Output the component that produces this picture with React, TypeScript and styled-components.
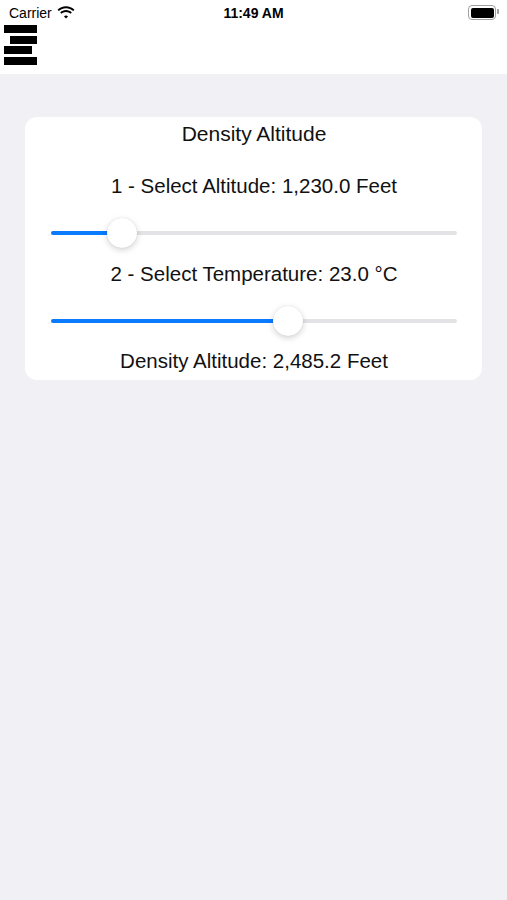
import styled, { createGlobalStyle } from "styled-components";

const GlobalStyle = createGlobalStyle`
  html, body {
    margin: 0;
    padding: 0;
    background: #f0f0f5;
    font-family: "Liberation Sans", Arial, sans-serif;
  }
`;

const Screen = styled.div`
  width: 507px;
  height: 900px;
  background: #f0f0f5;
  display: flex;
  flex-direction: column;
`;

const TopBar = styled.div`
  background: #ffffff;
  height: 74px;
  display: flex;
  flex-direction: column;
`;

const StatusBar = styled.div`
  height: 25px;
  display: flex;
  align-items: center;
  justify-content: space-between;
  padding: 0 9px;
  font-size: 14px;
  color: #000;
  position: relative;
`;

const Carrier = styled.div`
  display: flex;
  align-items: center;
  gap: 5px;
`;

const Time = styled.div`
  position: absolute;
  left: 0;
  right: 0;
  text-align: center;
  font-weight: bold;
  pointer-events: none;
`;

const Battery = styled.div`
  width: 23px;
  height: 10px;
  border: 1.5px solid #a0a0a0;
  border-radius: 4px;
  padding: 1.5px;
  position: relative;
  margin-right: 2px;
  &::after {
    content: "";
    position: absolute;
    right: -4px;
    top: 3px;
    width: 2px;
    height: 5px;
    background: #a0a0a0;
    border-radius: 0 1px 1px 0;
  }
`;

const BatteryFill = styled.div`
  width: 100%;
  height: 100%;
  background: #000;
  border-radius: 2px;
`;

const MenuIcon = styled.div`
  margin-left: 4px;
  width: 33px;
  display: flex;
  flex-direction: column;
  gap: 2.5px;
`;

const MenuBar = styled.div<{ $inset: number; $width: number }>`
  flex: none;
  height: 8px;
  background: #000;
  margin-left: ${(p) => p.$inset}px;
  width: ${(p) => p.$width}px;
`;

const Body = styled.div`
  padding: 43px 25px 0 25px;
`;

const Card = styled.div`
  background: #ffffff;
  border-radius: 12px;
  padding: 5px 25px 7px 26px;
  display: flex;
  flex-direction: column;
  align-items: stretch;
`;

const Label = styled.div<{ $mt: number; $size?: number }>`
  text-align: center;
  font-size: ${(p) => p.$size ?? 20.5}px;
  color: #111;
  margin-top: ${(p) => p.$mt}px;
  line-height: 24px;
`;

const SliderWrap = styled.div<{ $mt: number }>`
  position: relative;
  height: 30px;
  margin-top: ${(p) => p.$mt}px;
`;

const Track = styled.div`
  position: absolute;
  left: 0;
  right: 0;
  top: 13px;
  height: 4px;
  border-radius: 2px;
  background: #e3e3e6;
`;

const Fill = styled.div`
  position: absolute;
  left: 0;
  top: 13px;
  height: 4px;
  border-radius: 2px;
  background: #0a7aff;
`;

const Thumb = styled.div`
  position: absolute;
  top: 0;
  width: 30px;
  height: 30px;
  margin-left: -15px;
  border-radius: 50%;
  background: #fff;
  box-shadow: 0 2px 6px rgba(0, 0, 0, 0.18), 0 0 1px rgba(0, 0, 0, 0.15);
`;

const Slider = ({ value, mt }: { value: number; mt: number }) => (
  <SliderWrap $mt={mt}>
    <Track />
    <Fill style={{ width: `${value * 100}%` }} />
    <Thumb style={{ left: `${value * 100}%` }} />
  </SliderWrap>
);

const Wifi = () => (
  <svg width="18" height="13" viewBox="0 0 18 13">
    <path d="M9 2.2c2.8 0 5.3 1.1 7.2 2.9l1.3-1.4C15.3 1.6 12.3.3 9 .3S2.7 1.6.5 3.7l1.3 1.4C3.7 3.3 6.2 2.2 9 2.2z" fill="#000" />
    <path d="M9 6c1.8 0 3.3.7 4.5 1.8l1.3-1.4C13.3 5 11.3 4.1 9 4.1S4.7 5 3.2 6.4l1.3 1.4C5.7 6.7 7.2 6 9 6z" fill="#000" />
    <path d="M9 9.6c.8 0 1.5.3 2 .8L9 12.6l-2-2.2c.5-.5 1.2-.8 2-.8z" fill="#000" />
  </svg>
);

export default function App() {
  return (
    <>
      <GlobalStyle />
      <Screen>
        <TopBar>
          <StatusBar>
            <Carrier>
              Carrier
              <Wifi />
            </Carrier>
            <Time>11:49 AM</Time>
            <Battery>
              <BatteryFill />
            </Battery>
          </StatusBar>
          <MenuIcon>
            <MenuBar $inset={0} $width={33} />
            <MenuBar $inset={6} $width={27} />
            <MenuBar $inset={0} $width={28} />
            <MenuBar $inset={0} $width={33} />
          </MenuIcon>
        </TopBar>
        <Body>
          <Card>
            <Label $mt={0} $size={21}>Density Altitude</Label>
            <Label $mt={28}>1 - Select Altitude: 1,230.0 Feet</Label>
            <Slider value={0.175} mt={20} />
            <Label $mt={14}>2 - Select Temperature: 23.0 °C</Label>
            <Slider value={0.584} mt={20} />
            <Label $mt={13}>Density Altitude: 2,485.2 Feet</Label>
          </Card>
        </Body>
      </Screen>
    </>
  );
}
